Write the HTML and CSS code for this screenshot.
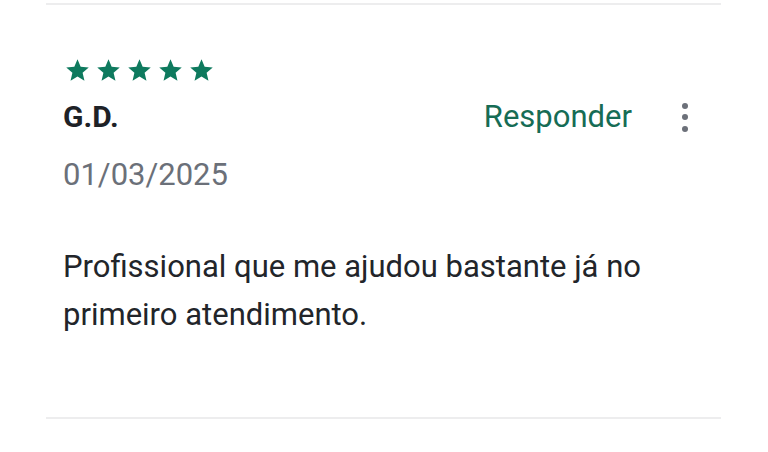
FILE: index.html
```html
<!DOCTYPE html>
<html lang="pt-BR">
<head>
<meta charset="utf-8">
<title>Avaliação</title>
<link rel="stylesheet" href="styles.css">
</head>
<body>
<div class="page">
  <div class="divider divider-top"></div>
  <article class="review">
    <div class="stars" aria-label="5 estrelas">
      <svg class="star" viewBox="0 0 24 24"><path d="M12 17.27L18.18 21l-1.64-7.03L22 9.24l-7.19-.61L12 2 9.19 8.63 2 9.24l5.46 4.73L5.82 21z"/></svg>
      <svg class="star" viewBox="0 0 24 24"><path d="M12 17.27L18.18 21l-1.64-7.03L22 9.24l-7.19-.61L12 2 9.19 8.63 2 9.24l5.46 4.73L5.82 21z"/></svg>
      <svg class="star" viewBox="0 0 24 24"><path d="M12 17.27L18.18 21l-1.64-7.03L22 9.24l-7.19-.61L12 2 9.19 8.63 2 9.24l5.46 4.73L5.82 21z"/></svg>
      <svg class="star" viewBox="0 0 24 24"><path d="M12 17.27L18.18 21l-1.64-7.03L22 9.24l-7.19-.61L12 2 9.19 8.63 2 9.24l5.46 4.73L5.82 21z"/></svg>
      <svg class="star" viewBox="0 0 24 24"><path d="M12 17.27L18.18 21l-1.64-7.03L22 9.24l-7.19-.61L12 2 9.19 8.63 2 9.24l5.46 4.73L5.82 21z"/></svg>
    </div>
    <div class="head-row">
      <div class="name">G.D.</div>
      <div class="actions">
        <span class="reply">Responder</span>
        <span class="kebab" aria-label="Mais opções"><i></i><i></i><i></i></span>
      </div>
    </div>
    <div class="date">01/03/2025</div>
    <p class="text">Profissional que me ajudou bastante já no primeiro atendimento.</p>
  </article>
  <div class="divider divider-bottom"></div>
</div>
</body>
</html>
```
FILE: styles.css
```css
html, body {
  margin: 0;
  padding: 0;
  background: #ffffff;
}
body {
  font-family: Roboto, "Noto Sans", "Liberation Sans", sans-serif;
  width: 768px;
  height: 452px;
  overflow: hidden;
}
.page {
  padding: 0 47px 0 46px;
}
.divider {
  height: 2px;
  background: #ededee;
}
.divider-top {
  margin-top: 3px;
}
.review {
  padding: 52px 0 0 17px;
  height: 412px;
  box-sizing: border-box;
}
.stars {
  display: flex;
  gap: 4px;
  margin-left: 1px;
  height: 27px;
}
.star {
  width: 27px;
  height: 27px;
  fill: #0e7a5e;
}
.head-row {
  display: flex;
  align-items: center;
  justify-content: space-between;
  margin-top: 15px;
  height: 36px;
}
.name {
  font-size: 30px;
  font-weight: 700;
  color: #1e2227;
  line-height: 36px;
}
.actions {
  display: flex;
  align-items: center;
}
.reply {
  font-size: 31px;
  color: #166c55;
  line-height: 36px;
}
.kebab {
  display: flex;
  flex-direction: column;
  gap: 5.5px;
  margin-left: 50px;
  margin-right: 33px;
}
.kebab i {
  display: block;
  width: 6px;
  height: 6px;
  border-radius: 50%;
  background: #6c7079;
}
.date {
  margin-top: 22px;
  font-size: 31px;
  line-height: 36px;
  color: #6b7079;
}
.text {
  margin: 50px 0 0;
  font-size: 31px;
  line-height: 48px;
  color: #22252a;
}
```
